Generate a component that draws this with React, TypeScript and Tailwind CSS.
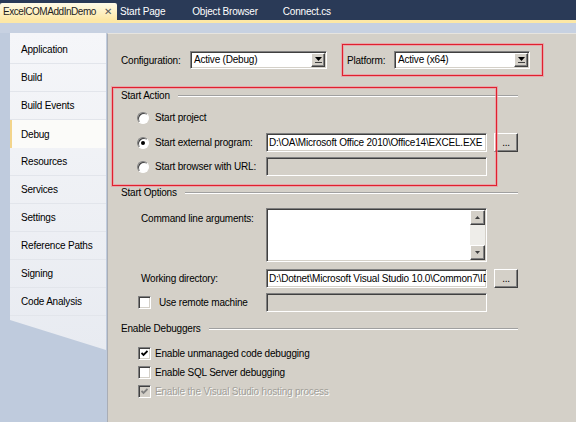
import React from "react";

const navItems = [
  "Application",
  "Build",
  "Build Events",
  "Debug",
  "Resources",
  "Services",
  "Settings",
  "Reference Paths",
  "Signing",
  "Code Analysis",
];

const sunken =
  "border border-t-[#808080] border-l-[#808080] border-b-white border-r-white shadow-[inset_1px_1px_0_#404040,inset_-1px_-1px_0_#d4d0c8]";
const raised =
  "border border-t-white border-l-white border-b-[#404040] border-r-[#404040] shadow-[inset_-1px_-1px_0_#808080]";

function DropButton() {
  return (
    <div className={`mr-[1px] flex h-[14px] w-[14px] flex-col items-center justify-center gap-[1px] bg-[#d4d0c8] ${raised}`}>
      <svg width="7" height="4" viewBox="0 0 7 4">
        <path d="M0 0h7L3.5 4z" fill="#000" />
      </svg>
      <div className="h-[1px] w-[7px] bg-[#404040]" />
    </div>
  );
}

function Select({ value, width }: { value: string; width: string }) {
  return (
    <div className={`flex h-[18px] items-center bg-white ${width} ${sunken}`}>
      <span className="flex-1 pl-[3px] leading-none">{value}</span>
      <DropButton />
    </div>
  );
}

function Radio({ checked }: { checked?: boolean }) {
  return (
    <div className="flex h-[12px] w-[12px] items-center justify-center rounded-full border border-t-[#808080] border-l-[#808080] border-b-white border-r-white bg-white shadow-[inset_1px_1px_0_#404040]">
      {checked && <div className="h-[4px] w-[4px] rounded-full bg-black" />}
    </div>
  );
}

function Check({ checked, disabled }: { checked?: boolean; disabled?: boolean }) {
  return (
    <div className={`flex h-[13px] w-[13px] items-center justify-center ${disabled ? "bg-[#d4d0c8]" : "bg-white"} ${sunken}`}>
      {checked && (
        <svg width="7" height="7" viewBox="0 0 7 7">
          <path d="M0.5 3l2 2 4-4" fill="none" stroke={disabled ? "#808080" : "#000"} strokeWidth="1.8" />
        </svg>
      )}
    </div>
  );
}

function TextBox({ value, disabled }: { value?: string; disabled?: boolean }) {
  return (
    <div className={`flex h-[19px] w-[221px] items-center overflow-hidden whitespace-nowrap ${disabled ? "bg-[#d4d0c8]" : "bg-white"} ${sunken}`}>
      <span className="pl-[2px] leading-none">{value}</span>
    </div>
  );
}

function Browse() {
  return (
    <div className={`ml-[7px] flex h-[19px] w-[24px] items-end justify-center pb-[3px] bg-[#d4d0c8] leading-none ${raised}`}>
      ...
    </div>
  );
}

function GroupHeader({ title }: { title: string }) {
  return (
    <div className="flex h-[14px] w-[397px] items-center gap-[8px]">
      <span className="leading-none">{title}</span>
      <div className="flex-1 border-t border-b border-t-[#a0a0a0] border-b-white" />
    </div>
  );
}

export default function App() {
  return (
    <div className="flex h-[422px] w-[576px] flex-col overflow-hidden bg-[#c7d1e1] font-['Liberation_Sans',Arial,sans-serif] text-[10px] tracking-[-0.2px] text-black">
      {/* document tabs */}
      <div className="flex h-[20px] items-end bg-[#2a3a57] text-[10px]">
        <div className="flex h-[17px] w-[117px] items-center justify-between rounded-t-[2px] bg-gradient-to-b from-[#fffbe8] to-[#fde7a3] pl-[3px] pr-[5px] tracking-[-0.45px] text-[#1e1e1e]">
          <span>ExcelCOMAddInDemo</span>
          <span className="text-[10px] text-[#5a5a5a]">✕</span>
        </div>
        <div className="flex h-[17px] items-center pl-[3px] text-white">Start Page</div>
        <div className="flex h-[17px] items-center pl-[27px] text-white">Object Browser</div>
        <div className="flex h-[17px] items-center pl-[25px] text-white">Connect.cs</div>
      </div>
      <div className="h-[3px] bg-[#fde8a6]" />

      <div className="flex flex-1 pt-[10px]">
        {/* side navigation */}
        <div className="w-[107px] bg-[#bfcbdd]">
          <div className="ml-[10px] h-[317px] w-[96px] bg-gradient-to-b from-[#f5f6f9] to-[#e8ebf1] pt-[3px] [clip-path:polygon(0_0,100%_0,100%_100%,0_calc(100%-30px))]">
            {navItems.map((item) => (
              <div
                key={item}
                className={
                  item === "Debug"
                    ? "flex h-[28px] items-center border-l-2 border-[#f3d58c] bg-[#fbfbf9] pl-[9px]"
                    : "flex h-[28px] items-center border-b border-[#e2e5eb] pl-[11px]"
                }
              >
                {item}
              </div>
            ))}
          </div>
        </div>

        {/* property page */}
        <div className="flex-1 border-t border-l border-t-[#e6e4df] border-l-[#a9adb5] bg-[#d4d0c8] pl-[13px]">
          <div className="mt-[10px] flex items-center">
            <span className="w-[69px]">Configuration:</span>
            <Select value="Active (Debug)" width="w-[137px]" />
            <div className="ml-[15px] flex h-[32px] w-[201px] items-center border border-[#e0202e] pl-[4px] shadow-[0_0_0_1px_rgba(240,140,150,0.6),inset_0_0_0_1px_rgba(240,140,150,0.6)]">
              <span className="w-[47px]">Platform:</span>
              <Select value="Active (x64)" width="w-[136px]" />
            </div>
          </div>

          {/* Start Action */}
          <div className="relative mt-[11px] pt-[2px]">
            <div className="pointer-events-none absolute top-0 left-[-9px] h-[99px] w-[385px] border border-[#e0202e] shadow-[0_0_0_1px_rgba(240,140,150,0.6),inset_0_0_0_1px_rgba(240,140,150,0.6)]" />
            <GroupHeader title="Start Action" />
            <div className="mt-[5px] flex h-[19px] items-center pl-[16px]">
              <Radio />
              <span className="ml-[6px]">Start project</span>
            </div>
            <div className="mt-[6px] flex h-[19px] items-center pl-[16px]">
              <Radio checked />
              <span className="ml-[6px] w-[111px]">Start external program:</span>
              <TextBox value="D:\OA\Microsoft Office 2010\Office14\EXCEL.EXE" />
              <Browse />
            </div>
            <div className="mt-[5px] flex h-[19px] items-center pl-[16px]">
              <Radio />
              <span className="ml-[6px] w-[111px]">Start browser with URL:</span>
              <TextBox disabled />
            </div>
          </div>

          {/* Start Options */}
          <div className="mt-[10px]">
            <GroupHeader title="Start Options" />
            <div className="mt-[8px] flex items-start pl-[20px]">
              <span className="w-[125px] pt-[3px]">Command line arguments:</span>
              <div className={`flex h-[54px] w-[221px] bg-white ${sunken}`}>
                <div className="flex-1" />
                <div className="mr-[1px] my-[1px] flex w-[15px] flex-col justify-between bg-[#eeede9]">
                  <div className={`flex h-[15px] items-center justify-center bg-[#d4d0c8] ${raised}`}>
                    <svg width="5" height="3" viewBox="0 0 5 3"><path d="M0 3h5L2.5 0z" fill="#404040" /></svg>
                  </div>
                  <div className={`flex h-[15px] items-center justify-center bg-[#d4d0c8] ${raised}`}>
                    <svg width="5" height="3" viewBox="0 0 5 3"><path d="M0 0h5L2.5 3z" fill="#404040" /></svg>
                  </div>
                </div>
              </div>
            </div>
            <div className="mt-[7px] flex h-[19px] items-center pl-[20px]">
              <span className="w-[125px]">Working directory:</span>
              <TextBox value="D:\Dotnet\Microsoft Visual Studio 10.0\Common7\ID" />
              <Browse />
            </div>
            <div className="mt-[5px] flex h-[19px] items-center pl-[17px]">
              <Check />
              <span className="ml-[8px] w-[107px]">Use remote machine</span>
              <TextBox disabled />
            </div>
          </div>

          {/* Enable Debuggers */}
          <div className="mt-[10px]">
            <GroupHeader title="Enable Debuggers" />
            <div className="mt-[8px] flex h-[19px] items-center pl-[17px]">
              <Check checked />
              <span className="ml-[4px]">Enable unmanaged code debugging</span>
            </div>
            <div className="flex h-[19px] items-center pl-[17px]">
              <Check />
              <span className="ml-[4px]">Enable SQL Server debugging</span>
            </div>
            <div className="flex h-[19px] items-center pl-[17px]">
              <Check checked disabled />
              <span className="ml-[4px] text-[#a19f99] [text-shadow:1px_1px_0_#ffffff]">Enable the Visual Studio hosting process</span>
            </div>
          </div>
        </div>
      </div>
    </div>
  );
}
